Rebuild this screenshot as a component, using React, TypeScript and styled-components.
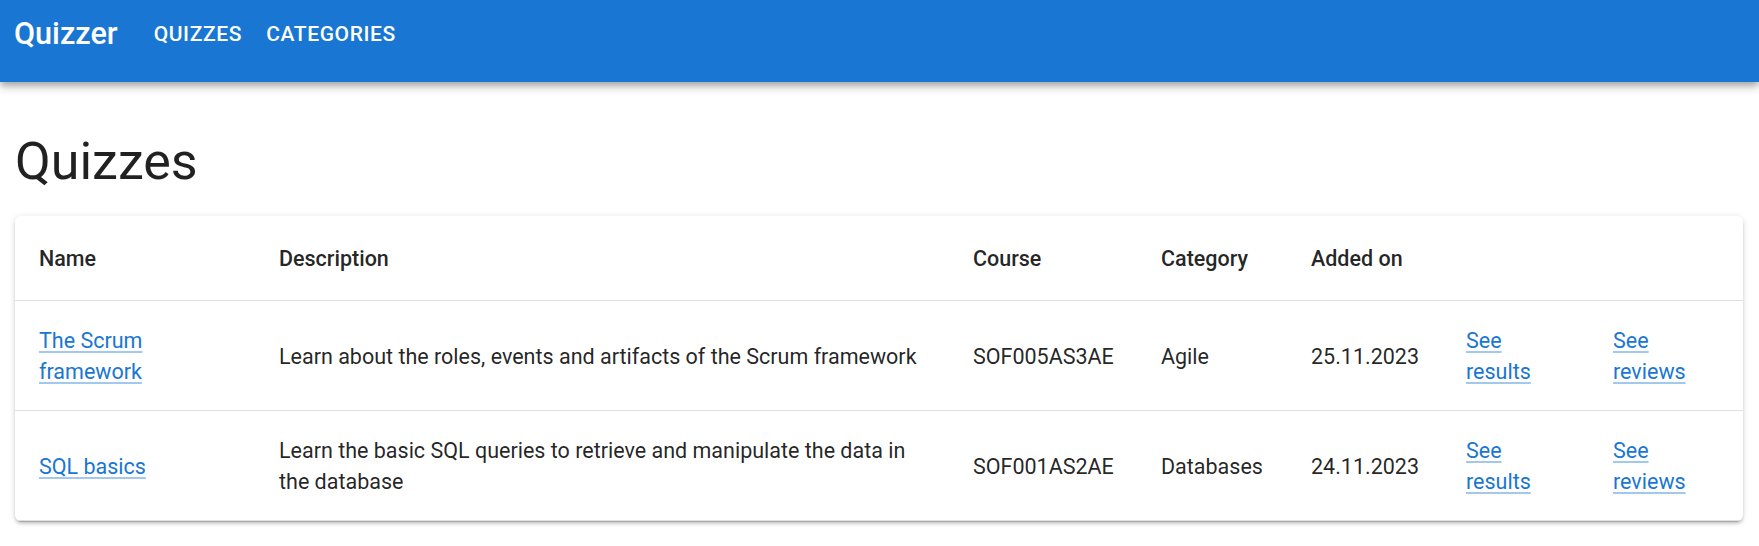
import React from "react";
import styled, { createGlobalStyle } from "styled-components";

type Quiz = {
  id: number;
  name: string;
  description: string;
  course: string;
  category: string;
  addedOn: string;
};

const quizzes: Quiz[] = [
  {
    id: 1,
    name: "The Scrum framework",
    description:
      "Learn about the roles, events and artifacts of the Scrum framework",
    course: "SOF005AS3AE",
    category: "Agile",
    addedOn: "25.11.2023",
  },
  {
    id: 2,
    name: "SQL basics",
    description:
      "Learn the basic SQL queries to retrieve and manipulate the data in the database",
    course: "SOF001AS2AE",
    category: "Databases",
    addedOn: "24.11.2023",
  },
];

const GlobalStyle = createGlobalStyle`
  body {
    margin: 0;
    background: #ffffff;
    font-family: Roboto, "Noto Sans", "Liberation Sans", sans-serif;
    color: rgba(0, 0, 0, 0.87);
  }
`;

const AppBar = styled.header`
  height: 82px;
  background: #1976d2;
  color: #ffffff;
  box-shadow: 0 3px 6px -1px rgba(0, 0, 0, 0.2), 0 6px 7px 0 rgba(0, 0, 0, 0.14),
    0 1px 14px 0 rgba(0, 0, 0, 0.12);
  position: relative;
  z-index: 1;
`;

const Toolbar = styled.nav`
  display: flex;
  align-items: center;
  height: 69px;
  padding: 0 14px;
`;

const Logo = styled.div`
  font-size: 30.6px;
  font-weight: 500;
  margin-right: 24px;
  line-height: 1;
`;

const NavLink = styled.a`
  padding: 0 12px;
  font-size: 21px;
  font-weight: 500;
  letter-spacing: 0.03em;
  text-transform: uppercase;
  color: #ffffff;
  text-decoration: none;
  cursor: pointer;
  line-height: 1;
`;

const Main = styled.main`
  padding: 49px 16px 24px 15px;
`;

const Heading = styled.h1`
  margin: 0 0 23px;
  font-size: 52px;
  font-weight: 400;
  line-height: 62px;
  color: rgba(0, 0, 0, 0.87);
`;

const Card = styled.div`
  background: #ffffff;
  border-radius: 6px;
  overflow: hidden;
  box-shadow: 0 4px 1px -3px rgba(0, 0, 0, 0.2), 0 3px 3px 0 rgba(0, 0, 0, 0.14),
    0 1px 7px 0 rgba(0, 0, 0, 0.12);
`;

const Table = styled.table`
  width: 100%;
  border-collapse: collapse;
  table-layout: fixed;
`;

const HeadCell = styled.th`
  padding: 27px 24px 26px;
  text-align: left;
  font-size: 21.5px;
  font-weight: 500;
  line-height: 31px;
  color: rgba(0, 0, 0, 0.87);
  border-bottom: 1px solid #e0e0e0;
  white-space: nowrap;
`;

const Cell = styled.td<{ $align?: "left" | "center"; $narrow?: number }>`
  padding: 24px ${({ $narrow }) => $narrow ?? 24}px 23px 24px;
  text-align: ${({ $align }) => $align ?? "left"};
  font-size: 21.5px;
  font-weight: 400;
  line-height: 31px;
  color: rgba(0, 0, 0, 0.87);
  border-bottom: 1px solid #e0e0e0;
  vertical-align: middle;
`;

const Code = styled.span`
  white-space: nowrap;
`;

const Link = styled.a`
  color: #1976d2;
  text-decoration: underline;
  text-decoration-color: rgba(25, 118, 210, 0.4);
  text-underline-offset: 3px;
  cursor: pointer;
`;

const columns = [240, 694, 188, 150, 155, 147, 154];

export default function App() {
  return (
    <>
      <GlobalStyle />
      <AppBar>
        <Toolbar>
          <Logo>Quizzer</Logo>
          <NavLink>Quizzes</NavLink>
          <NavLink>Categories</NavLink>
        </Toolbar>
      </AppBar>
      <Main>
        <Heading>Quizzes</Heading>
        <Card>
          <Table>
            <colgroup>
              {columns.map((w, i) => (
                <col key={i} style={{ width: w }} />
              ))}
            </colgroup>
            <thead>
              <tr>
                <HeadCell>Name</HeadCell>
                <HeadCell>Description</HeadCell>
                <HeadCell>Course</HeadCell>
                <HeadCell>Category</HeadCell>
                <HeadCell>Added on</HeadCell>
                <HeadCell />
                <HeadCell />
              </tr>
            </thead>
            <tbody>
              {quizzes.map((q) => (
                <tr key={q.id}>
                  <Cell $narrow={80}>
                    <Link>{q.name}</Link>
                  </Cell>
                  <Cell>{q.description}</Cell>
                  <Cell $align="center">
                    <Code>{q.course}</Code>
                  </Cell>
                  <Cell>{q.category}</Cell>
                  <Cell>{q.addedOn}</Cell>
                  <Cell $narrow={40}>
                    <Link>See results</Link>
                  </Cell>
                  <Cell $narrow={45}>
                    <Link>See reviews</Link>
                  </Cell>
                </tr>
              ))}
            </tbody>
          </Table>
        </Card>
      </Main>
    </>
  );
}
